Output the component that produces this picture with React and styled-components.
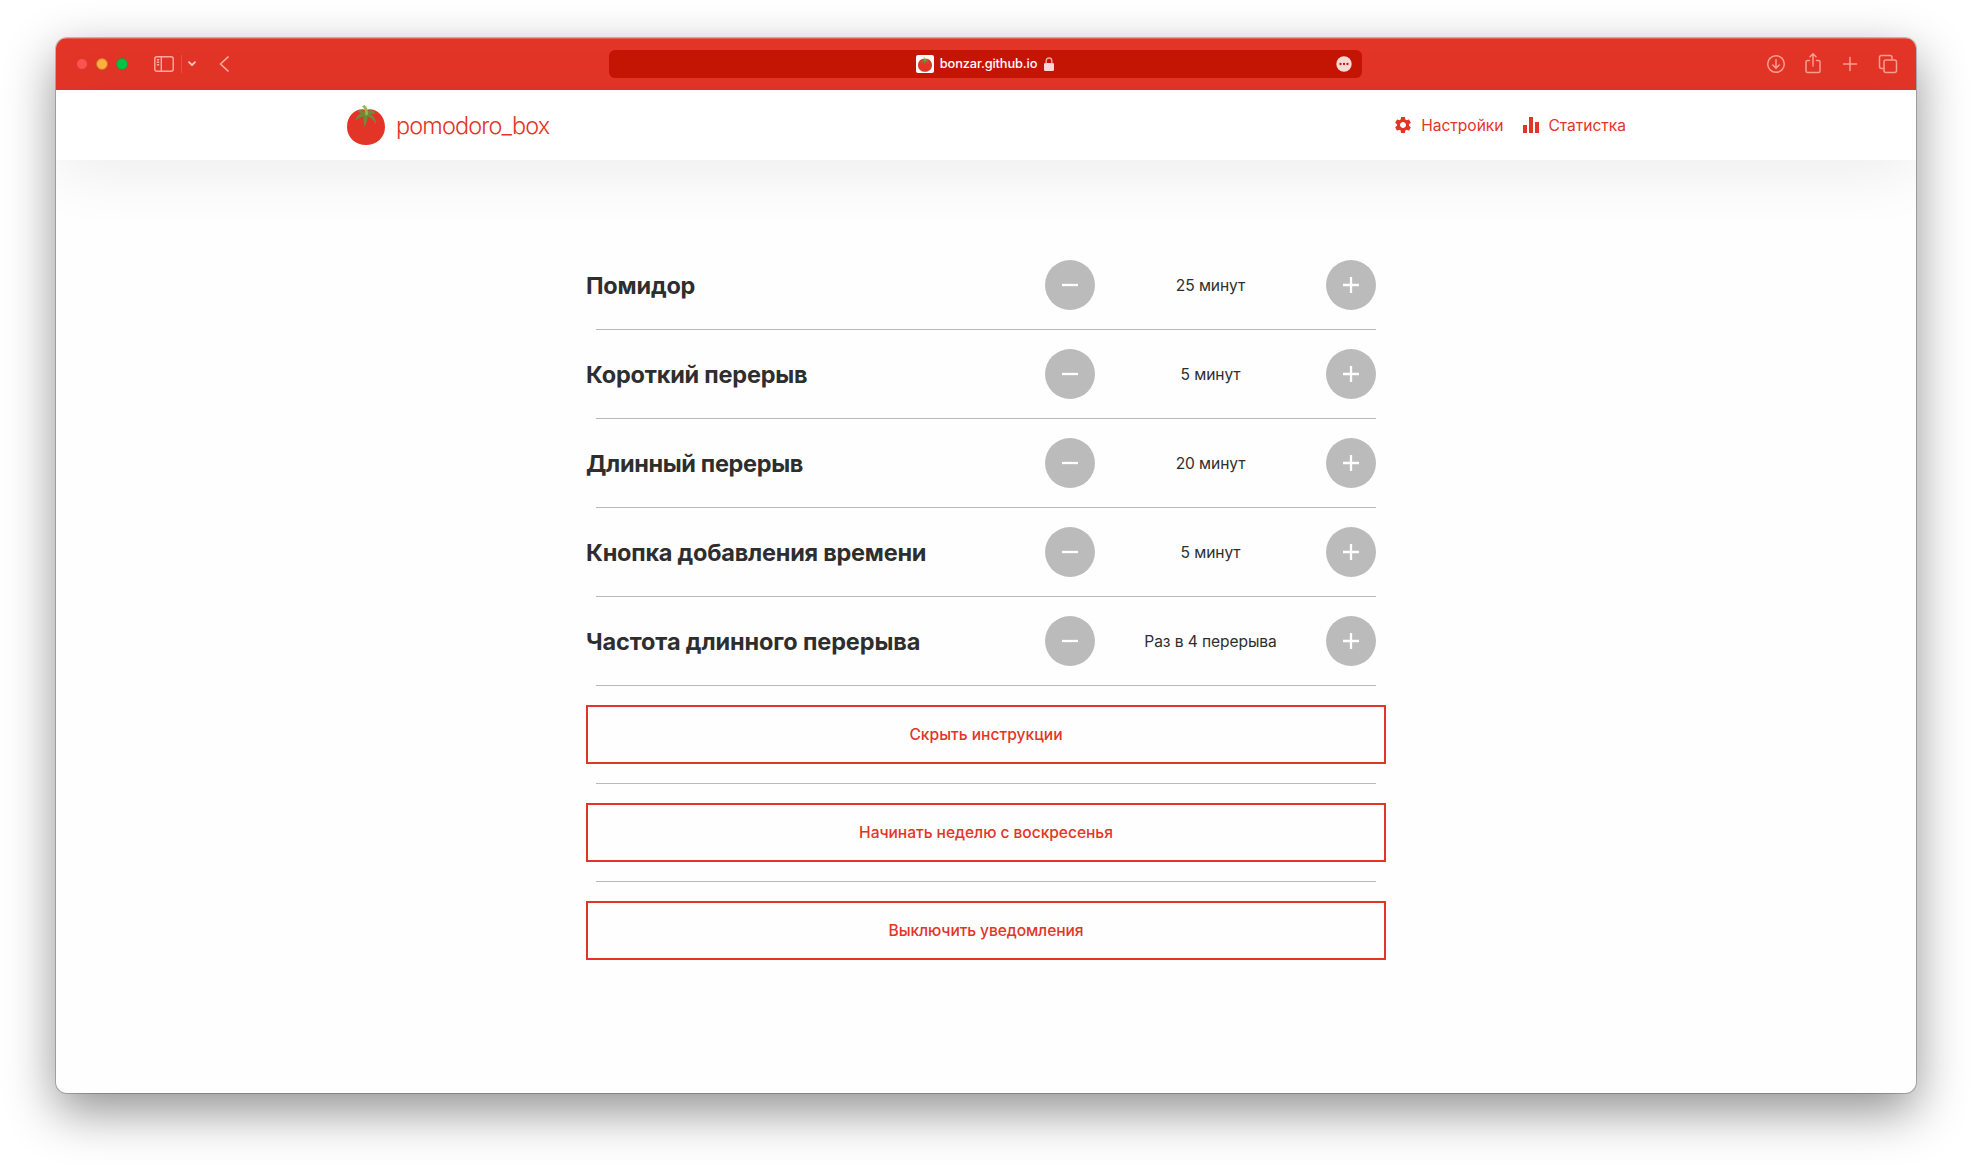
import React from "react";
import styled, { createGlobalStyle } from "styled-components";

const RED = "#e33527";

const GlobalStyle = createGlobalStyle`
  *, *::before, *::after { box-sizing: border-box; }
  body {
    margin: 0;
    background: #fff;
    font-family: Inter, "Noto Sans", sans-serif;
    color: #2e2e2e;
    overflow: hidden;
  }
  button { font: inherit; padding: 0; cursor: pointer; }
`;

const Desktop = styled.div`
  height: 1167px;
  padding: 38px 56px 74px;
`;

const Window = styled.div`
  height: 1055px;
  border-radius: 11px;
  overflow: hidden;
  background: #fefefe;
  box-shadow: 0 0 0 1px rgba(0, 0, 0, 0.22), 0 18px 50px rgba(0, 0, 0, 0.44);
`;

const Toolbar = styled.div`
  display: grid;
  grid-template-columns: 553px 753px 1fr;
  align-items: center;
  height: 52px;
  background: ${RED};
  box-shadow: inset 0 1px 0 rgba(255, 255, 255, 0.2);
`;

const ToolGroup = styled.div`
  display: flex;
  align-items: center;
`;

const LeftTools = styled(ToolGroup)`
  padding-left: 20px;
`;

const RightTools = styled(ToolGroup)`
  justify-content: flex-end;
  gap: 17px;
  padding-right: 19px;
`;

const Lights = styled.div`
  display: flex;
  gap: 8px;
  margin-right: 26px;
`;

const Light = styled.span`
  width: 12px;
  height: 12px;
  border-radius: 50%;
  background: ${(p) => p.$fill};
  border: 1px solid ${(p) => p.$edge};
`;

const ToolSeparator = styled.span`
  width: 1px;
  height: 18px;
  margin: 0 6px 0 7px;
  background: #e94c40;
`;

const BackWrap = styled.span`
  display: flex;
  margin-left: 23px;
`;

const AddressBar = styled.div`
  display: grid;
  grid-template-columns: 1fr auto 1fr;
  align-items: center;
  height: 28px;
  border-radius: 6px;
  background: #c41404;
  padding: 0 10px;
`;

const Address = styled.div`
  grid-column: 2;
  display: flex;
  align-items: center;
  padding-right: 1px;
  color: #fff;
  font-size: 12.8px;
  font-weight: 500;
  line-height: 18px;
  letter-spacing: -0.12px;
`;

const Favicon = styled.span`
  display: flex;
  align-items: center;
  justify-content: center;
  width: 18px;
  height: 18px;
  margin-right: 6px;
  border-radius: 2px;
  background: #fff;
`;

const LockWrap = styled.span`
  display: flex;
  margin-left: 7px;
`;

const MoreWrap = styled.span`
  display: flex;
  justify-self: end;
`;

const Header = styled.header`
  display: flex;
  justify-content: center;
  height: 70px;
  background: #fff;
  box-shadow: 0 12px 63px rgba(0, 0, 0, 0.075);
`;

const HeaderInner = styled.div`
  display: flex;
  align-items: center;
  justify-content: space-between;
  width: 1280px;
  color: ${RED};
`;

const Logo = styled.div`
  display: flex;
  align-items: center;
  gap: 11px;
  padding-left: 1px;
`;

const LogoText = styled.span`
  padding-top: 2px;
  font-size: 23.5px;
  font-weight: 300;
  line-height: 28px;
  letter-spacing: -0.87px;
`;

const Nav = styled.nav`
  display: flex;
  gap: 19px;
`;

const NavItem = styled.a`
  display: flex;
  align-items: center;
  gap: ${(p) => p.$gap}px;
  font-size: 15.6px;
  line-height: 20px;
  letter-spacing: -0.03px;
`;

const NavLabel = styled.span`
  padding-top: 1px;
`;

const Main = styled.main`
  display: flex;
  flex-direction: column;
  width: 800px;
  margin: 100px auto 0;
`;

const Row = styled.div`
  display: flex;
  align-items: center;
  justify-content: space-between;
  height: 50px;
  padding-right: 10px;
`;

const Title = styled.h2`
  margin: 2px 0 0;
  font-size: 23.5px;
  font-weight: 700;
  line-height: 28px;
  letter-spacing: ${(p) => p.$track}px;
`;

const Stepper = styled.div`
  display: flex;
  align-items: center;
  justify-content: space-between;
  width: 331px;
`;

const Value = styled.span`
  padding-top: 2px;
  font-size: 15.6px;
  line-height: 20px;
  letter-spacing: -0.1px;
`;

const RoundButton = styled.button`
  display: flex;
  align-items: center;
  justify-content: center;
  width: 50px;
  height: 50px;
  border: 0;
  border-radius: 50%;
  background: #bbb;
`;

const Divider = styled.hr`
  width: 780px;
  height: 1px;
  margin: 19px 10px;
  border: 0;
  background: #b8b8b8;
`;

const WideButton = styled.button`
  width: 800px;
  height: 59px;
  border: 2px solid ${RED};
  background: transparent;
  color: ${RED};
  font-size: 15.6px;
  font-weight: 500;
  letter-spacing: ${(p) => p.$track}px;
`;

const Tomato = ({ width, height }) => (
  <svg width={width} height={height} viewBox="0 0 38 40">
    <path d="M19 5C27 2 38 9 38 22C38 33 29 40 19 40C9 40 0 33 0 22C0 9 11 2 19 5Z" fill={RED} />
    <path d="M18 7C15 4.500 12 4.500 10.500 6.500L14.500 8.500C11 9.500 9 12 8.500 15.500C11 13 14 12 17 11.500C16 15 17 19 17.500 21.500C19.500 18 20.500 15 20.500 11.500C24 12.500 27 15 29 19.500C29.500 15 27 11 23.500 9.500L28.500 8.500C27 4.500 23 4 20 6.500Z" fill="#76873a" />
    <path d="M15 1.500L17.500 0C20 2 21 4 21 9.500L18.500 10.500C18.500 6 17.500 3.500 15 1.500Z" fill="#a5b152" />
  </svg>
);

const SidebarIcon = () => (
  <svg width="20" height="16" viewBox="0 0 20 16" fill="none" stroke="#ffab9f" strokeWidth="1.400">
    <rect x="0.800" y="0.700" width="18.400" height="14.600" rx="2" />
    <path d="M7.300 1V15M2.800 3.700H5.200M2.800 6.200H5.200M2.800 8.700H5.200" />
  </svg>
);

const ChevronDown = () => (
  <svg width="8" height="6" viewBox="0 0 8 6" fill="none" stroke="#ffc9c1" strokeWidth="1.700" strokeLinecap="round" strokeLinejoin="round">
    <path d="M1 1.200L4 4.200L7 1.200" />
  </svg>
);

const BackIcon = () => (
  <svg width="10" height="16" viewBox="0 0 10 16" fill="none" stroke="#ffab9f" strokeWidth="1.700" strokeLinecap="round" strokeLinejoin="round">
    <path d="M9 1L1.500 8L9 15" />
  </svg>
);

const LockIcon = () => (
  <svg width="10" height="14" viewBox="0 0 10 14">
    <rect x="0" y="6" width="10" height="8" rx="1.300" fill="#f8d9d6" />
    <path d="M2.200 6.500V3.700C2.200 0 7.800 0 7.800 3.700V6.500" fill="none" stroke="#f0a49c" strokeWidth="1.400" />
  </svg>
);

const MoreIcon = () => (
  <svg width="16" height="16" viewBox="0 0 16 16">
    <circle cx="8" cy="8" r="7.700" fill="#f8d9d6" />
    <g fill="#c41404">
      <circle cx="4.500" cy="8" r="1.150" />
      <circle cx="8" cy="8" r="1.150" />
      <circle cx="11.500" cy="8" r="1.150" />
    </g>
  </svg>
);

const ToolSvg = styled.svg`
  width: 20px;
  height: 22px;
  overflow: visible;
  fill: none;
  stroke: #fb9d91;
  stroke-width: 1.5;
  stroke-linecap: round;
  stroke-linejoin: round;
`;

const GearIcon = () => (
  <svg width="20" height="20" viewBox="0 0 24 24" fill={RED}>
    <path d="M19.140 12.940c.04-.3.060-.61.060-.94 0-.32-.02-.64-.07-.94l2.030-1.580c.18-.14.230-.41.120-.61l-1.920-3.320c-.12-.22-.37-.29-.59-.22l-2.390.96c-.5-.38-1.030-.7-1.620-.94l-.36-2.540c-.04-.24-.24-.41-.48-.41h-3.840c-.24 0-.43.170-.47.410l-.36 2.540c-.59.240-1.130.570-1.620.940l-2.390-.96c-.22-.08-.47 0-.59.220L2.740 8.870c-.12.210-.08.470.120.610l2.030 1.580c-.05.3-.09.630-.09.940s.02.640.070.940l-2.030 1.580c-.18.140-.23.410-.12.610l1.920 3.320c.12.220.37.290.59.220l2.390-.96c.5.380 1.030.7 1.620.940l.36 2.540c.05.240.240.410.480.410h3.840c.24 0 .44-.17.470-.41l.36-2.540c.59-.24 1.130-.56 1.620-.94l2.390.960c.22.080.470 0 .590-.22l1.920-3.320c.12-.22.070-.47-.12-.61l-2.010-1.580zM12 15.600c-1.980 0-3.600-1.620-3.600-3.600s1.620-3.600 3.600-3.600 3.600 1.620 3.600 3.600-1.620 3.600-3.600 3.600z" />
  </svg>
);

const BarsIcon = () => (
  <svg width="16" height="16" viewBox="0 0 16 16" fill={RED}>
    <path d="M0 8H4V16H0ZM6 0H10V16H6ZM12 5H16V16H12Z" />
  </svg>
);

const MinusIcon = () => (
  <svg width="16" height="16" viewBox="0 0 16 16" fill="#fff">
    <path d="M0 6.850H16V9.150H0Z" />
  </svg>
);

const PlusIcon = () => (
  <svg width="16" height="16" viewBox="0 0 16 16" fill="#fff">
    <path d="M0 6.850H6.850V0H9.150V6.850H16V9.150H9.150V16H6.850V9.150H0Z" />
  </svg>
);

const settings = [
  { title: "Помидор", value: "25 минут", track: -0.2 },
  { title: "Короткий перерыв", value: "5 минут", track: -0.22 },
  { title: "Длинный перерыв", value: "20 минут", track: -0.35 },
  { title: "Кнопка добавления времени", value: "5 минут", track: -0.24 },
  { title: "Частота длинного перерыва", value: "Раз в 4 перерыва", track: -0.12 },
];

const actions = [
  { label: "Скрыть инструкции", track: 0 },
  { label: "Начинать неделю с воскресенья", track: -0.05 },
  { label: "Выключить уведомления", track: -0.1 },
];

export default function App() {
  return (
    <Desktop>
      <GlobalStyle />
      <Window>
        <Toolbar>
          <LeftTools>
            <Lights>
              <Light $fill="#ff5150" $edge="#d23a35" />
              <Light $fill="#ffb03c" $edge="#c9702a" />
              <Light $fill="#00c347" $edge="#3c8a2c" />
            </Lights>
            <SidebarIcon />
            <ToolSeparator />
            <ChevronDown />
            <BackWrap><BackIcon /></BackWrap>
          </LeftTools>
          <AddressBar>
            <Address>
              <Favicon><Tomato width={14} height={15} /></Favicon>
              bonzar.github.io
              <LockWrap><LockIcon /></LockWrap>
            </Address>
            <MoreWrap><MoreIcon /></MoreWrap>
          </AddressBar>
          <RightTools>
            <ToolSvg viewBox="0 0 20 22">
              <circle cx="10" cy="11" r="8.300" />
              <path d="M10 6.800V15M6.800 12L10 15.200L13.200 12" />
            </ToolSvg>
            <ToolSvg viewBox="0 0 20 22">
              <path d="M6.500 7.500H4.500Q3 7.500 3 9V18Q3 19.500 4.500 19.500H15.500Q17 19.500 17 18V9Q17 7.500 15.500 7.500H13.500M10 13V1M7 3.800L10 0.800L13 3.800" />
            </ToolSvg>
            <ToolSvg viewBox="0 0 20 22">
              <path d="M3.500 11H16.500M10 4.500V17.500" />
            </ToolSvg>
            <ToolSvg viewBox="0 0 20 22">
              <rect x="7" y="7" width="12.500" height="12.500" rx="2" />
              <path d="M6.500 15.500H4.500Q2.500 15.500 2.500 13.500V4.500Q2.500 2.500 4.500 2.500H13Q15 2.500 15 4.500V6.500" />
            </ToolSvg>
          </RightTools>
        </Toolbar>
        <Header>
          <HeaderInner>
            <Logo>
              <Tomato width={38} height={40} />
              <LogoText>pomodoro_box</LogoText>
            </Logo>
            <Nav>
              <NavItem $gap={8}><GearIcon /><NavLabel>Настройки</NavLabel></NavItem>
              <NavItem $gap={10}><BarsIcon /><NavLabel>Статистка</NavLabel></NavItem>
            </Nav>
          </HeaderInner>
        </Header>
        <Main>
          {settings.map((s) => (
            <React.Fragment key={s.title}>
              <Row>
                <Title $track={s.track}>{s.title}</Title>
                <Stepper>
                  <RoundButton><MinusIcon /></RoundButton>
                  <Value>{s.value}</Value>
                  <RoundButton><PlusIcon /></RoundButton>
                </Stepper>
              </Row>
              <Divider />
            </React.Fragment>
          ))}
          {actions.map((a, i) => (
            <React.Fragment key={a.label}>
              {i > 0 && <Divider />}
              <WideButton $track={a.track}>{a.label}</WideButton>
            </React.Fragment>
          ))}
        </Main>
      </Window>
    </Desktop>
  );
}
